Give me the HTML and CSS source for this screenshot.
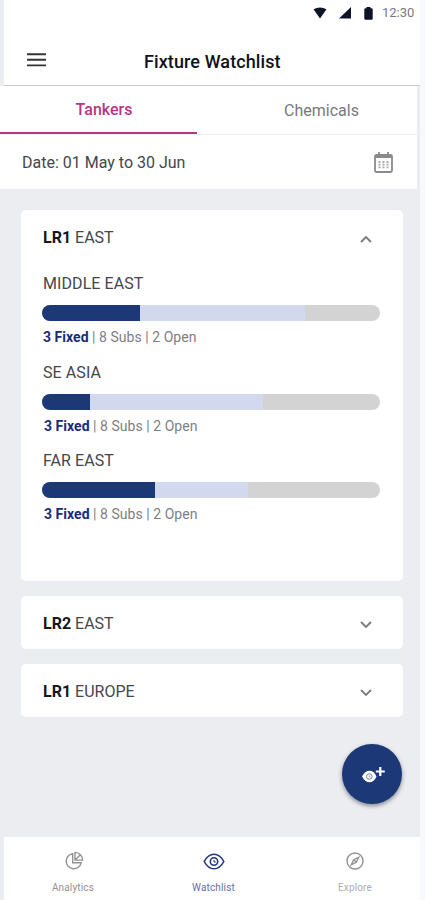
FILE: index.html
```html
<!DOCTYPE html>
<html lang="en">
<head>
<meta charset="utf-8">
<title>Fixture Watchlist</title>
<link rel="stylesheet" href="styles.css">
</head>
<body>
<div class="screen">
  <header class="header">
    <div class="status">
      <svg class="wifi" width="14" height="12" viewBox="0 0 14 12"><path d="M.5 2.2Q7-1.4 13.5 2.2L7 11.5Z"/></svg>
      <svg class="signal" width="12" height="12" viewBox="0 0 12 12"><path d="M12 0V11.5H0Z"/></svg>
      <svg class="battery" width="9" height="13" viewBox="0 0 9 13"><path d="M2.5 0h4v1.2h1Q8.7 1.2 8.7 2.4v9Q8.7 12.7 7.5 12.7h-6Q.3 12.7.3 11.4v-9Q.3 1.2 1.5 1.2h1Z"/></svg>
      <span class="clock">12:30</span>
    </div>
    <div class="titlebar">
      <svg class="menu" width="19" height="14" viewBox="0 0 19 14"><path d="M0 1.2h19M0 6.8h19M0 12.4h19"/></svg>
      <h1 class="title">Fixture Watchlist</h1>
    </div>
  </header>
  <nav class="tabs">
    <div class="tab tab-active"><span>Tankers</span></div>
    <div class="tab"><span>Chemicals</span></div>
  </nav>
  <div class="date">
    <span class="date-text">Date: 01 May to 30 Jun</span>
    <svg class="calendar" width="19" height="21" viewBox="0 0 19 21"><rect x="1" y="3" width="17" height="17" rx="1.5"/><path d="M1 5h17M5 0v5M14 0v5"/><path class="dots" d="M4.5 10h10.5M4.5 12.7h10.5M4.5 15.4h10.5"/></svg>
  </div>
  <main class="content">
    <section class="card card-open">
      <div class="card-head"><span class="card-title"><b>LR1</b> EAST</span>
        <svg class="chevron" width="12" height="8" viewBox="0 0 12 8"><path d="M1 7 6 2l5 5"/></svg></div>
      <div class="region">
        <h2>MIDDLE EAST</h2>
        <div class="bar"><i class="fixed" style="width:98px"></i><i class="subs" style="width:165px"></i></div>
        <p class="legend"><b>3 Fixed</b> | 8 Subs | 2 Open</p>
      </div>
      <div class="region">
        <h2>SE ASIA</h2>
        <div class="bar"><i class="fixed" style="width:48px"></i><i class="subs" style="width:173px"></i></div>
        <p class="legend legend-in"><b>3 Fixed</b> | 8 Subs | 2 Open</p>
      </div>
      <div class="region">
        <h2>FAR EAST</h2>
        <div class="bar"><i class="fixed" style="width:113px"></i><i class="subs" style="width:93px"></i></div>
        <p class="legend legend-in"><b>3 Fixed</b> | 8 Subs | 2 Open</p>
      </div>
    </section>
    <section class="card">
      <div class="card-head"><span class="card-title"><b>LR2</b> EAST</span>
        <svg class="chevron" width="12" height="8" viewBox="0 0 12 8"><path d="m1 1 5 5 5-5"/></svg></div>
    </section>
    <section class="card">
      <div class="card-head"><span class="card-title"><b>LR1</b> EUROPE</span>
        <svg class="chevron" width="12" height="8" viewBox="0 0 12 8"><path d="m1 1 5 5 5-5"/></svg></div>
    </section>
    <button class="fab" aria-label="Add to watchlist">
      <svg width="23" height="17" viewBox="0 0 23 17"><path fill="#fff" d="M0 10.5Q3 4.7 7.5 4.7T14.5 10.5Q12 16.3 7.5 16.3T0 10.5Z"/><circle cx="7.3" cy="10.5" r="2.8" fill="#fff" stroke="#7082ad" stroke-width="1"/><path d="M7.3 9v2h1.5" fill="none" stroke="#7082ad" stroke-width=".6"/><path d="M18.3 1v9M13.8 5.5h9" stroke="#fff" stroke-width="2.2"/></svg>
    </button>
  </main>
  <nav class="bottom">
    <div class="item analytics">
      <svg width="20" height="20" viewBox="0 0 20 20"><path d="M8.7 2.6A7.6 7.6 0 1 0 17.2 11.7H8.7Z"/><path d="M11 1.4V9.1h7.6A7.7 7.7 0 0 0 11 1.4ZM11 9.1l5.2-5.2"/></svg>
      <span>Analytics</span>
    </div>
    <div class="item watch">
      <svg width="22" height="20" viewBox="0 0 22 20"><path d="M1.2 10.5Q5 3.2 11 3.2t9.8 7.3Q17 17.8 11 17.8T1.2 10.5Z"/><circle cx="11" cy="10.5" r="3.7"/><path class="glint" d="M11 9v2h1.8"/></svg>
      <span>Watchlist</span>
    </div>
    <div class="item explore">
      <svg width="20" height="20" viewBox="0 0 20 20"><circle cx="10" cy="10" r="8"/><path d="m13.7 6.3-2.4 5L6.3 13.7l2.4-5ZM8.7 8.7l2.6 2.6"/></svg>
      <span>Explore</span>
    </div>
  </nav>
</div>
</body>
</html>
```

FILE: styles.css
```css
* { box-sizing: border-box; }
body { margin: 0; background: #f8f9fd; font-family: Roboto, sans-serif; color: #26272b; }
.screen { width: 420px; height: 900px; background: #ebedf1; display: flex; flex-direction: column; }
svg { display: block; flex: none; }
.header { height: 86px; margin-left: 4px; background: #fff; border-bottom: 1px solid #c9cbd0; }
.status { height: 26px; display: flex; align-items: center; justify-content: flex-end; padding-right: 6px; fill: #0d1428; }
.wifi { margin-right: 12px; }
.signal { margin-right: 13px; }
.battery { margin-right: 9px; }
.clock { width: 32px; font-size: 13px; line-height: 26px; color: #77797d; white-space: nowrap; }
.titlebar { display: flex; align-items: flex-start; height: 59px; padding-left: 23px; }
.menu { stroke: #333437; stroke-width: 1.9; margin-top: 27px; }
.title { margin: 24px 0 0 98px; font-size: 18px; line-height: 24px; font-weight: 500; letter-spacing: .1px; color: #111218; white-space: nowrap; }
.tabs { display: flex; flex: none; width: 417px; height: 49px; background: #fff; border-bottom: 1px solid #f0f1f4; }
.tab { flex: 1; display: flex; justify-content: center; font-size: 16px; line-height: 48px; color: #77787c; padding-top: 1px; padding-left: 29px; }
.tab-active { flex: none; width: 197px; padding: 0 0 0 11px; color: #b73581; font-weight: 500; border-bottom: 2px solid #b73581; }
.date { display: flex; flex: none; justify-content: space-between; width: 417px; height: 54px; padding: 0 24px 0 22px; background: #fff; }
.date-text { font-size: 16px; line-height: 56px; color: #45464a; }
.calendar { margin-top: 17px; fill: none; stroke: #898a8d; stroke-width: 1.8; }
.calendar .dots { stroke-width: 1.8; stroke-dasharray: 2 2; stroke: #aaa; }
.content { position: relative; flex: 1; padding: 21px 17px 0 21px; display: flex; flex-direction: column; gap: 15.2px; }
.card { flex: none; height: 53px; padding: 0 22px; background: #fff; border-radius: 5px; }
.card-open { height: 371px; }
.card-head { display: flex; height: 53px; justify-content: space-between; padding-right: 9px; }
.card-title { font-size: 16px; line-height: 55px; color: #44464b; }
.card-title b { font-weight: 700; color: #16171c; }
.chevron { margin-top: 25px; fill: none; stroke: #7b7c7f; stroke-width: 1.9; }
.region { height: 88.5px; }
.region h2 { margin: 0; padding-top: 11px; font-size: 16px; line-height: 20px; font-weight: 400; letter-spacing: .08px; color: #44464b; }
.bar { display: flex; height: 16px; margin: 11px 0 0 -.6px; width: 338px; border-radius: 8px; overflow: hidden; background: #d3d3d3; }
.fixed { background: #1d3877; }
.subs { background: #d2d9ef; }
.legend { margin: 8px 0 0; font-size: 14px; line-height: 17px; letter-spacing: .04px; color: #7e7f83; white-space: nowrap; }
.legend-in { padding-left: 1px; }
.legend b { color: #1b2c79; font-weight: 700; }
.fab { position: absolute; left: 342px; top: 555px; width: 60px; height: 60px; padding: 0 0 0 3px; border: 0; border-radius: 50%; background: #1d3877; box-shadow: 0 2px 4px rgba(30,35,50,.5); display: flex; align-items: center; justify-content: center; }
.bottom { flex: none; height: 63px; margin-left: 4px; background: #fff; display: flex; }
.item { display: flex; flex: none; flex-direction: column; align-items: center; width: 138px; padding-top: 14px; font-size: 10px; line-height: 14px; letter-spacing: .15px; color: #909194; }
.item svg { fill: none; stroke: #929396; stroke-width: 1.4; }
.item span { margin-top: 10px; }
.analytics svg { margin-left: 2px; }
.watch { width: 143px; color: #6870a0; }
.watch svg { stroke: #26377f; stroke-width: 1.6; }
.watch .glint { stroke-width: 1; }
.explore { width: 135px; padding-left: 5px; color: #acadb0; }
```
